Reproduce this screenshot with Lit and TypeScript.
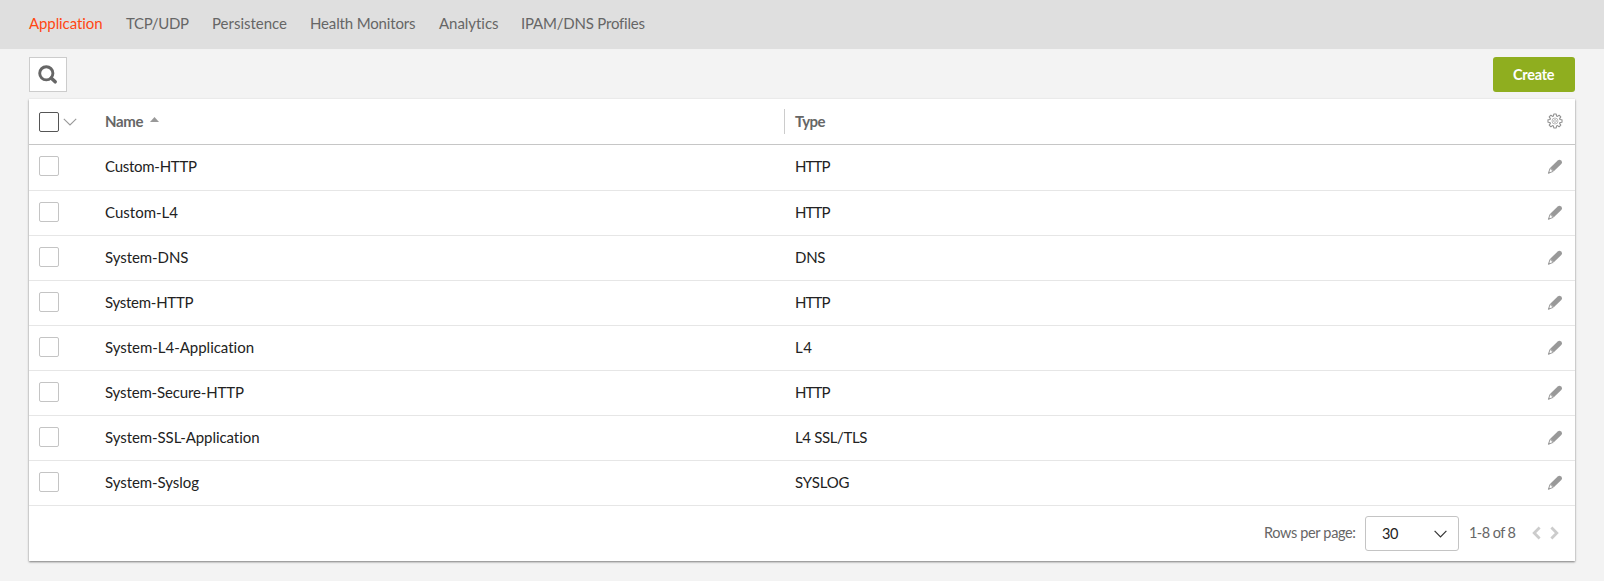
import { LitElement, html, svg, css } from "lit";
import { customElement, state } from "lit/decorators.js";
import { classMap } from "lit/directives/class-map.js";

const TABS = [
  { label: "Application", width: 73.5 },
  { label: "TCP/UDP", width: 63 },
  { label: "Persistence", width: 75 },
  { label: "Health Monitors", width: 105.5 },
  { label: "Analytics", width: 59.5 },
  { label: "IPAM/DNS Profiles", width: 124 },
];

const PROFILES = [
  { name: "Custom-HTTP", width: 92, type: "HTTP", typeWidth: 35.5 },
  { name: "Custom-L4", width: 73, type: "HTTP", typeWidth: 35.5 },
  { name: "System-DNS", width: 83.5, type: "DNS", typeWidth: 30.5 },
  { name: "System-HTTP", width: 88.5, type: "HTTP", typeWidth: 35.5 },
  { name: "System-L4-Application", width: 149, type: "L4", typeWidth: 17 },
  { name: "System-Secure-HTTP", width: 139, type: "HTTP", typeWidth: 35.5 },
  { name: "System-SSL-Application", width: 154.5, type: "L4 SSL/TLS", typeWidth: 72.5 },
  { name: "System-Syslog", width: 94, type: "SYSLOG", typeWidth: 54.5 },
];

// Eight-toothed outline, centred on the origin.
const gearPath = (() => {
  const pts: string[] = [];
  for (let i = 0; i < 8; i++) {
    const base = (i * Math.PI) / 4;
    for (const [r, a] of [[5.2, -0.3], [7.1, -0.17], [7.1, 0.17], [5.2, 0.3]]) {
      pts.push(`${(r * Math.cos(base + a)).toFixed(2)} ${(r * Math.sin(base + a)).toFixed(2)}`);
    }
  }
  return `M${pts.join("L")}Z`;
})();

const searchIcon = svg`<svg width="20" height="20" viewBox="0 0 20 20" fill="none" stroke="#666">
  <circle cx="8.300" cy="8.300" r="6.600" stroke-width="2.900"/><path d="M13.400 13.200L17.200 16.800" stroke-width="3.500" stroke-linecap="round"/></svg>`;
const gearIcon = svg`<svg width="16" height="16" viewBox="-8 -8 16 16" fill="none" stroke="#909090" stroke-linejoin="round">
  <path d=${gearPath} stroke-width="1.100"/><circle r="3" stroke-width=".6"/><circle r="1.400" stroke-width=".6"/></svg>`;
const pencilIcon = svg`<svg width="16" height="16" viewBox="0 0 16 16" fill="#999">
  <path d="M10.700 1.500Q12.400-.1 14.100 1.500Q15.900 3.200 14.300 4.900L6.800 12.200L3.200 8.700Z"/>
  <path d="M3 9.300L6.200 12.400L1.500 14.200Z" fill="#fff" stroke="#999" stroke-width="1" stroke-linejoin="round"/>
  <path d="M2 12.400L3.300 13.700L1 14.700Z"/></svg>`;

@customElement("app-root")
export class AppRoot extends LitElement {
  @state() private active = "Application";

  static styles = css`
    :host { display: block; height: 581px; background: #f3f3f3; color: #222; font: 15px/20px Lato, sans-serif; font-variant-ligatures: none; overflow: hidden; }
    * { box-sizing: border-box; }
    svg { display: block; flex: none; }
    nav { display: flex; gap: 23.2px; height: 49px; padding: 14px 29px 0; background: #dfdfdf; color: #666; }
    nav a { flex: none; }
    nav a.active { color: #ff4713; }
    .toolbar { display: flex; justify-content: space-between; padding: 8px 29px 7px; height: 50px; }
    .search { width: 38px; height: 35px; border: 1px solid #ccc; background: #fff; display: grid; place-items: center; }
    .create { display: grid; place-items: center; width: 82px; height: 35px; border: 0; border-radius: 3px; background: #8fae1f; color: #fff; font: 700 14.5px/20px Lato, sans-serif; padding: 0; }
    .card { margin: 0 29px; height: 462px; background: #fff; box-shadow: 0 1px 2px rgba(0,0,0,.5); }
    .row { display: grid; grid-template-columns: 76px 679px 1fr 36px; height: 45px; align-items: center; border-bottom: 1px solid #e6e6e6; }
    .row.first { height: 46px; }
    .head { height: 46px; border-color: #c6c6c6; color: #666; font-weight: 700; }
    .select { display: flex; align-items: center; gap: 4px; padding-left: 10px; }
    .row:not(.head) .select { align-self: start; padding-top: 11px; }
    .box { width: 20px; height: 20px; border: 1px solid #c4c4c4; border-radius: 2px; background: #fff; }
    .head .box { border-color: #555; }
    .name { display: flex; align-items: center; gap: 6px; padding-bottom: 1px; }
    .head .name { padding: 1px 0 0; }
    .sort { padding-bottom: 4px; }
    .type { padding: 0 0 1px 11px; }
    .head .type { border-left: 1px solid #ccc; height: 25px; padding: 3px 0 0 10px; }
    .action { padding: 0 0 1px 7.5px; }
    .footer { display: flex; height: 55px; align-items: center; justify-content: flex-end; padding-right: 16px; color: #666; font-size: 14.500px; }
    .pager-label { margin: 0 9.5px 1px 0; }
    .page-size { display: flex; align-items: center; justify-content: space-between; width: 94px; height: 35px; padding: 0 11px 0 16px; border: 1px solid #c4c4c4; border-radius: 3px; color: #222; margin-right: 10px; }
    .range { margin: 0 16px 1px 0; }
    .arrows { display: flex; gap: 9px; padding-bottom: 1px; }
  `;

  // Sets a label to an exact advance width.
  private fit(text: string, width: number) {
    return svg`<svg width=${width} height="20" overflow="visible"><text x="0" y="15" fill="currentColor" textLength=${width}>${text}</text></svg>`;
  }

  render() {
    return html`
      <nav>
        ${TABS.map((t) => html`<a class=${classMap({ active: t.label === this.active })}
          @click=${() => (this.active = t.label)}>${this.fit(t.label, t.width)}</a>`)}
      </nav>
      <div class="toolbar">
        <div class="search">${searchIcon}</div>
        <button class="create">${this.fit("Create", 41.5)}</button>
      </div>
      <section class="card">
        <div class="row head">
          <div class="select"><span class="box"></span>
            <svg width="14" height="8" viewBox="0 0 14 8" fill="none" stroke="#999" stroke-width="1.100"><path d="M.8.8L7 7L13.200.8"/></svg>
          </div>
          <div class="name">${this.fit("Name", 38.5)}<span class="sort"><svg width="9" height="9" viewBox="0 0 9 9"><path d="M0 6L4.500 1L9 6Z" fill="#999"/></svg></span></div>
          <div class="type">${this.fit("Type", 30.5)}</div>
          <div class="action">${gearIcon}</div>
        </div>
        ${PROFILES.map((p, i) => html`<div class=${classMap({ row: true, first: i === 0 })}>
          <div class="select"><span class="box"></span></div>
          <div class="name">${this.fit(p.name, p.width)}</div>
          <div class="type">${this.fit(p.type, p.typeWidth)}</div>
          <div class="action">${pencilIcon}</div>
        </div>`)}
        <div class="footer">
          <span class="pager-label">${this.fit("Rows per page:", 92)}</span>
          <div class="page-size">${this.fit("30", 16.5)}
            <svg width="13" height="8" viewBox="0 0 13 8" fill="none" stroke="#333" stroke-width="1.200"><path d="M.6.8L6.500 6.800L12.400.8"/></svg>
          </div>
          <span class="range">${this.fit("1-8 of 8", 47)}</span>
          <div class="arrows">
            <svg width="9" height="14" viewBox="0 0 9 14" fill="none" stroke="#ccc" stroke-width="2.800"><path d="M7.600 1.500L2.200 7L7.600 12.500"/></svg>
            <svg width="9" height="14" viewBox="0 0 9 14" fill="none" stroke="#ccc" stroke-width="2.800"><path d="M1.400 1.500L6.800 7L1.400 12.500"/></svg>
          </div>
        </div>
      </section>`;
  }
}
